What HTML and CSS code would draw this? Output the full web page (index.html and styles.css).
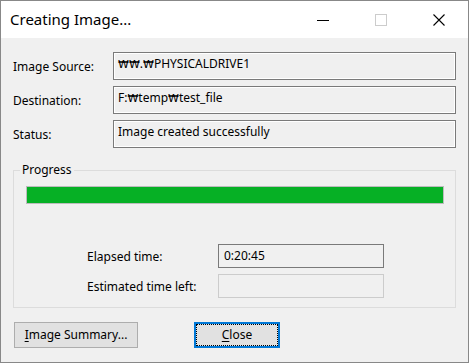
FILE: index.html
```html
<!DOCTYPE html>
<html lang="en">
<head>
  <meta charset="UTF-8" />
  <title>Creating Image...</title>
  <link rel="stylesheet" href="styles.css">
</head>
<body>
  <div class="window">
    <div class="titlebar">
      <div class="title">Creating Image...</div>
      <div class="caption-buttons">
        <div class="caption-btn" aria-label="Minimize">
          <svg width="12" height="12" viewBox="0 0 12 12"><path d="M0 6.5h12" stroke="#000" stroke-width="1"/></svg>
        </div>
        <div class="caption-btn" aria-label="Maximize">
          <svg width="12" height="12" viewBox="0 0 12 12"><rect x="0.5" y="0.5" width="11" height="11" fill="none" stroke="#ccc" stroke-width="1"/></svg>
        </div>
        <div class="caption-btn" aria-label="Close">
          <svg width="12" height="12" viewBox="0 0 12 12"><path d="M0.5 0.5L11.5 11.5M11.5 0.5L0.5 11.5" stroke="#000" stroke-width="1.1"/></svg>
        </div>
      </div>
    </div>

    <div class="client">
      <div class="field-row">
        <div class="field-label">Image Source:</div>
        <div class="edit"><span class="won">₩₩</span>.<span class="won">₩</span>PHYSICALDRIVE1</div>
      </div>
      <div class="field-row">
        <div class="field-label">Destination:</div>
        <div class="edit">F:<span class="won">₩</span>temp<span class="won">₩</span>test_file</div>
      </div>
      <div class="field-row status-row">
        <div class="field-label">Status:</div>
        <div class="edit">Image created successfully</div>
      </div>

      <fieldset class="group">
        <legend>Progress</legend>
        <div class="progress"><div class="progress-fill" style="width: 100%"></div></div>
        <div class="times">
          <div class="time-label">Elapsed time:</div>
          <div class="time-box">0:20:45</div>
          <div class="time-label">Estimated time left:</div>
          <div class="time-box disabled"></div>
        </div>
      </fieldset>

      <div class="buttons">
        <button class="btn summary"><u>I</u>mage Summary...</button>
        <button class="btn close default"><u>C</u>lose</button>
      </div>
    </div>
  </div>
</body>
</html>
```

FILE: styles.css
```css
* {
  box-sizing: border-box;
}

body {
  margin: 0;
  padding: 0;
  font-family: "Segoe UI", "Noto Sans", "Noto Sans CJK KR", sans-serif;
  font-size: 12px;
  color: #000;
  background: #fff;
}

.window {
  width: 469px;
  height: 363px;
  border: 1px solid #888;
  display: flex;
  flex-direction: column;
  background: #f0f0f0;
}

.titlebar {
  height: 37px;
  background: #fff;
  display: flex;
  align-items: center;
  justify-content: space-between;
}

.title {
  padding-left: 9px;
  font-size: 15px;
  padding-bottom: 2px;
}

.caption-buttons {
  display: flex;
  height: 100%;
}

.caption-btn {
  width: 58px;
  height: 100%;
  display: flex;
  align-items: center;
  justify-content: center;
}

.client {
  flex: 1;
  padding: 14px 12px 0 12px;
}

.field-row {
  display: flex;
  align-items: center;
  height: 28px;
  margin-bottom: 6px;
}

.status-row {
  margin-top: 2px;
  margin-bottom: 0;
}

.field-label {
  width: 100px;
}

.edit {
  width: 343px;
  height: 28px;
  border: 1px solid #7a7a7a;
  box-shadow: inset 0 0 0 1px #fff;
  padding: 3px 4px 0 4px;
  line-height: 16px;
  white-space: nowrap;
}

.won {
  font-family: "DejaVu Sans", sans-serif;
  font-size: 11px;
}

.group {
  margin: 14px 0 0 0;
  padding: 0 11px 9px 12px;
  border: 1px solid #dcdcdc;
  width: 443px;
}

.group legend {
  padding: 0 2px;
  margin-left: -6px;
  line-height: 16px;
}

.progress {
  margin-top: 8px;
  height: 18px;
  width: 418px;
  border: 1px solid #bcbcbc;
  background: #e6e6e6;
}

.progress-fill {
  height: 100%;
  background: #06b025;
}

.times {
  display: grid;
  grid-template-columns: 131px 166px;
  row-gap: 6px;
  margin: 40px 0 0 61px;
  align-items: center;
}

.time-box {
  height: 24px;
  border: 1px solid #7a7a7a;
  padding: 0 5px;
  line-height: 21px;
}

.time-box.disabled {
  border-color: #cccccc;
}

.buttons {
  display: flex;
  gap: 56px;
  margin: 14px 0 0 1px;
}

.btn {
  font-family: inherit;
  font-size: 12px;
  color: #000;
  height: 26px;
  background: #e1e1e1;
  border: 1px solid #adadad;
  padding: 0;
  line-height: 22px;
}

.btn u {
  text-decoration-thickness: 1px;
  text-underline-offset: 2px;
}

.summary {
  width: 124px;
}

.close {
  width: 86px;
}

.btn.default {
  border: 2px solid #0078d7;
  outline: 1px dotted #000;
  outline-offset: -3px;
}
```
